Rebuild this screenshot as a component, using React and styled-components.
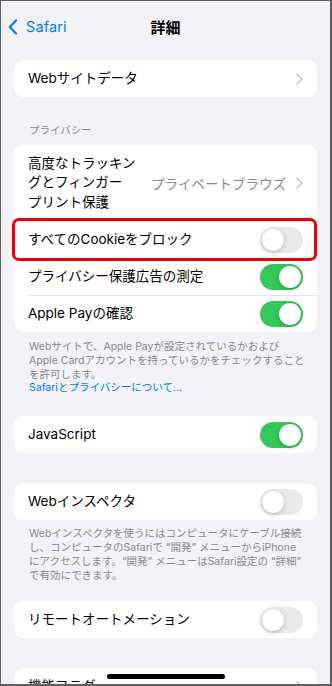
import styled, { createGlobalStyle } from "styled-components";

const GlobalStyle = createGlobalStyle`
    html, body {
        margin: 0;
        padding: 0;
        background: #f2f2f7;
    }
    * {
        box-sizing: border-box;
    }
`;

export default function App() {
    return (
        <>
            <GlobalStyle />
            <Frame>
                <NavBar>
                    <BackButton>
                        <svg width="10" height="16" viewBox="0 0 10 16">
                            <path
                                d="M8 1.5L1.8 8L8 14.5"
                                fill="none"
                                stroke="#007aff"
                                strokeWidth="2.2"
                                strokeLinecap="round"
                                strokeLinejoin="round"
                            />
                        </svg>
                        <span>Safari</span>
                    </BackButton>
                    <Title>詳細</Title>
                </NavBar>

                <Card $top={8}>
                    <Row>
                        <Label>Webサイトデータ</Label>
                        <Chevron />
                    </Row>
                </Card>

                <SectionHeader>プライバシー</SectionHeader>
                <Card>
                    <Row $tall>
                        <Label $narrow>
                            高度なトラッキン
                            <br />
                            グとフィンガー
                            <br />
                            プリント保護
                        </Label>
                        <Value>プライベートブラウズ</Value>
                        <Chevron />
                    </Row>
                    <Row $highlight $divider>
                        <Label>すべてのCookieをブロック</Label>
                        <Toggle />
                    </Row>
                    <Row $divider>
                        <Label>プライバシー保護広告の測定</Label>
                        <Toggle $on />
                    </Row>
                    <Row $divider>
                        <Label>Apple Payの確認</Label>
                        <Toggle $on />
                    </Row>
                </Card>
                <Footer $top={8}>
                    Webサイトで、Apple Payが設定されているかおよび
                    <br />
                    Apple Cardアカウントを持っているかをチェックすること
                    <br />
                    を許可します。
                    <br />
                    <FooterLink>Safariとプライバシーについて...</FooterLink>
                </Footer>

                <Card $top={21}>
                    <Row>
                        <Label>JavaScript</Label>
                        <Toggle $on />
                    </Row>
                </Card>

                <Card $top={30}>
                    <Row>
                        <Label>Webインスペクタ</Label>
                        <Toggle />
                    </Row>
                </Card>
                <Footer $top={7}>
                    Webインスペクタを使うにはコンピュータにケーブル接続
                    <br />
                    し、コンピュータのSafariで “開発” メニューからiPhone
                    <br />
                    にアクセスします。“開発” メニューはSafari設定の “詳細”
                    <br />
                    で有効にできます。
                </Footer>

                <Card $top={19}>
                    <Row>
                        <Label>リモートオートメーション</Label>
                        <Toggle />
                    </Row>
                </Card>

                <Card $top={30}>
                    <Row>
                        <Label>機能フラグ</Label>
                        <Chevron />
                    </Row>
                </Card>

                <HomeIndicator />
            </Frame>
        </>
    );
}

const Chevron = () => (
    <ChevronIcon width="7" height="12" viewBox="0 0 7 12">
        <path
            d="M1 1L6 6L1 11"
            fill="none"
            stroke="#c4c4c7"
            strokeWidth="1.6"
            strokeLinecap="round"
            strokeLinejoin="round"
        />
    </ChevronIcon>
);

const Frame = styled.div`
    position: relative;
    width: 332px;
    height: 686px;
    overflow: hidden;
    background: #f2f2f7;
    border: 1px solid #5f5f5f;
    border-right-width: 2px;
    border-bottom-width: 2px;
    font-family: Inter, "Noto Sans CJK JP", sans-serif;
    color: #000;
    display: flex;
    flex-direction: column;
`;

const NavBar = styled.header`
    position: relative;
    height: 51px;
    flex-shrink: 0;
    display: flex;
    align-items: center;
    justify-content: center;
`;

const BackButton = styled.div`
    position: absolute;
    left: 7px;
    top: 0;
    height: 100%;
    display: flex;
    align-items: center;
    gap: 8px;
    color: #007aff;
    font-size: 14.5px;
    letter-spacing: 0.1px;

    svg {
        margin-top: 1px;
    }
`;

const Title = styled.h1`
    margin: 0;
    font-size: 15px;
    font-weight: 700;
    font-family: "Noto Sans CJK JP", sans-serif;
`;

const Card = styled.section`
    margin: ${(p) => p.$top || 0}px 13px 0;
    background: #fff;
    border-radius: 9px;
    flex-shrink: 0;
`;

const Row = styled.div`
    position: relative;
    display: flex;
    align-items: center;
    min-height: ${(p) => (p.$tall ? 76 : 37)}px;
    padding: 0 14px;
    gap: 8px;

    ${(p) =>
        p.$divider &&
        `
        &::before {
            content: "";
            position: absolute;
            top: 0;
            left: 14px;
            right: 0;
            height: 1px;
            background: #e4e4e8;
        }
    `}

    ${(p) =>
        p.$highlight &&
        `
        &::after {
            content: "";
            position: absolute;
            top: -3px;
            bottom: -3px;
            left: -2px;
            right: 0;
            border: 3px solid #e8000b;
            border-radius: 7px;
            z-index: 2;
        }
    `}
`;

const Label = styled.div`
    flex: ${(p) => (p.$narrow ? "0 0 auto" : "1")};
    font-size: 13.5px;
    line-height: 19.5px;
    white-space: nowrap;
`;

const Value = styled.div`
    flex: 1;
    text-align: right;
    font-size: 13.5px;
    color: #8a8a8e;
    white-space: nowrap;
`;

const ChevronIcon = styled.svg`
    flex-shrink: 0;
    margin-left: 2px;
`;

const SectionHeader = styled.div`
    padding: 27px 28px 8px;
    font-size: 10.5px;
    line-height: 13px;
    color: #8a8a8e;
    flex-shrink: 0;
`;

const Footer = styled.div`
    padding: ${(p) => p.$top || 7}px 20px 0 28px;
    font-size: 10.5px;
    line-height: 13.8px;
    color: #8a8a8e;
    white-space: nowrap;
    flex-shrink: 0;
`;

const FooterLink = styled.span`
    color: #007aff;
`;

const Toggle = styled.div`
    position: relative;
    flex-shrink: 0;
    width: 43px;
    height: 26px;
    border-radius: 13px;
    background: ${(p) => (p.$on ? "#34c759" : "#e9e9eb")};

    &::after {
        content: "";
        position: absolute;
        top: 2px;
        left: ${(p) => (p.$on ? "19px" : "2px")};
        width: 22px;
        height: 22px;
        border-radius: 50%;
        background: #fff;
        box-shadow: 0 2px 5px rgba(0, 0, 0, 0.18), 0 0 1px rgba(0, 0, 0, 0.15);
    }
`;

const HomeIndicator = styled.div`
    position: absolute;
    left: 106px;
    top: 673px;
    width: 118px;
    height: 5px;
    border-radius: 3px;
    background: #000;
    z-index: 3;
`;
